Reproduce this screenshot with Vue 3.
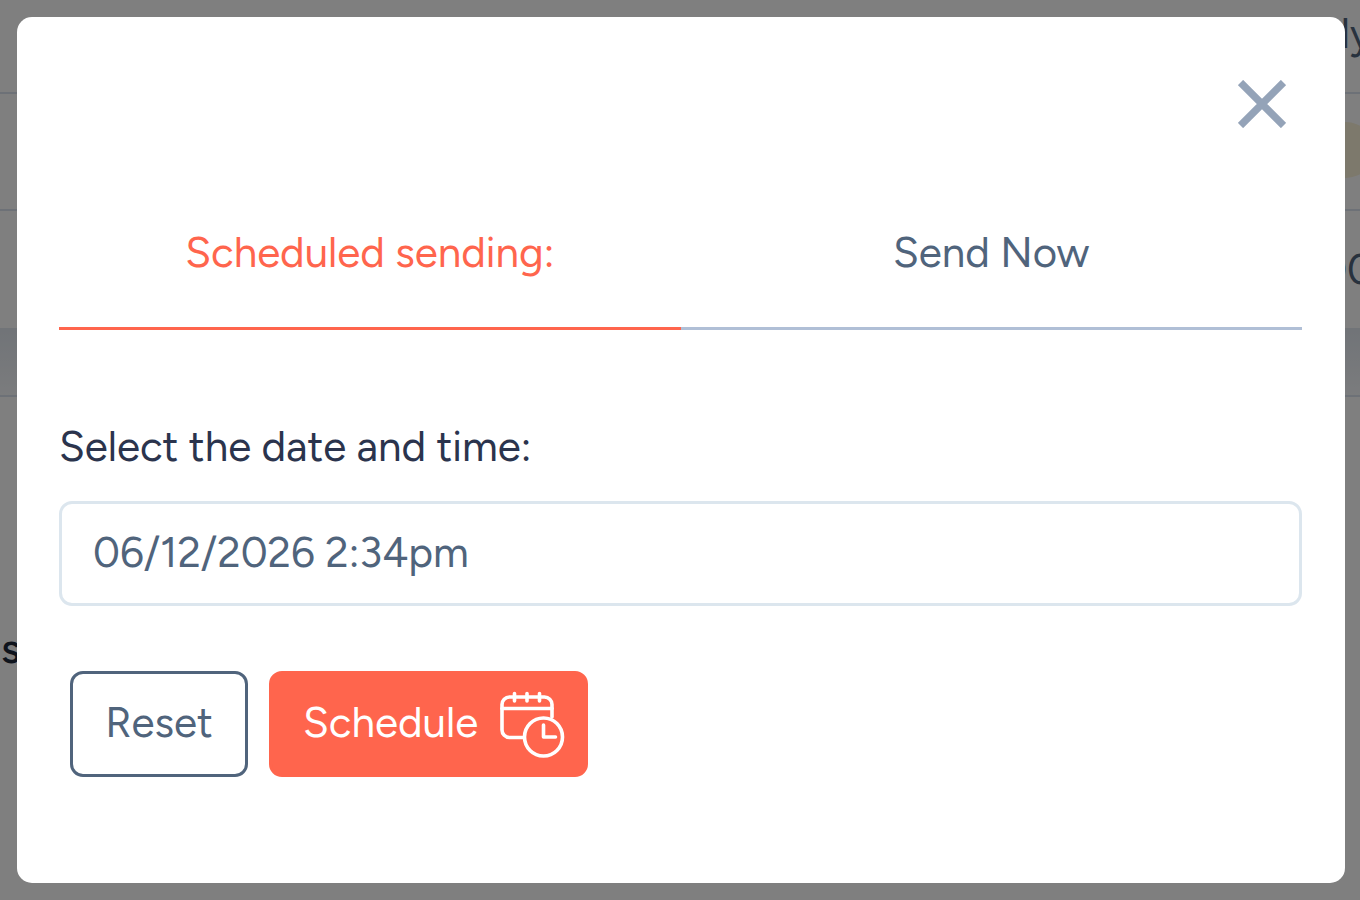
<template>
  <div class="page">
    <div class="page-content" aria-hidden="true">
      <div class="list-row list-row-first"><span>ly</span></div>
      <div class="list-row"><span class="status-pill"></span></div>
      <div class="list-row list-row-last"><span>00</span></div>
      <div class="list-footer"></div>
      <div class="section-title">s</div>
    </div>

    <div class="overlay">
      <div class="modal" role="dialog" aria-modal="true" aria-label="Schedule">
        <div class="modal-header">
          <button type="button" class="close-button" aria-label="Close">
            <svg viewBox="0 0 48 48" fill="none" stroke="currentColor" stroke-width="7.4">
              <path d="M2.500 2.500 45.500 45.500M45.500 2.500 2.500 45.500" />
            </svg>
          </button>
        </div>

        <div class="tabs" role="tablist">
          <button
            v-for="tab in tabs"
            :key="tab.id"
            type="button"
            role="tab"
            class="tab"
            :class="{ active: activeTab === tab.id }"
            :aria-selected="activeTab === tab.id"
            @click="activeTab = tab.id"
          >
            {{ tab.label }}
          </button>
        </div>

        <form @submit.prevent>
          <label class="field-label" for="send-at">Select the date and time:</label>
          <input id="send-at" v-model="sendAt" class="field-input" type="text" />

          <div class="actions">
            <button type="button" class="btn btn-outline" @click="reset">Reset</button>
            <button type="submit" class="btn btn-primary">
              <span>Schedule</span>
              <svg
                class="calendar-icon"
                viewBox="0 0 66 68"
                fill="none"
                stroke="currentColor"
                stroke-width="3.6"
                stroke-linecap="round"
                stroke-linejoin="round"
              >
                <path d="M24 46.500H10.500a7.500 7.500 0 0 1-7.500-7.500V13.500A7.500 7.500 0 0 1 10.500 6h35a7.500 7.500 0 0 1 7.500 7.500V26" />
                <path d="M3 17.500H53" />
                <path d="M15.500 2.500V10M28 2.500V10M40.500 2.500V10" />
                <circle cx="44.500" cy="46" r="19" />
                <path d="M44.500 34V46H56.500" />
              </svg>
            </button>
          </div>
        </form>
      </div>
    </div>
  </div>
</template>

<script setup>
import { ref } from 'vue'

const defaultDate = '06/12/2026 2:34pm'

const tabs = [
  { id: 'scheduled', label: 'Scheduled sending:' },
  { id: 'now', label: 'Send Now' }
]

const activeTab = ref('scheduled')
const sendAt = ref(defaultDate)

const reset = () => {
  sendAt.value = defaultDate
}
</script>

<style>
body {
  margin: 0;
  background: #808080;
}
</style>

<style scoped>
.page {
  display: grid;
  min-height: 100vh;
  overflow: hidden;
  font-family: Figtree, Lato, sans-serif;
  font-size: 42px;
  line-height: 64px;
  color: #50647c;
}

.page-content,
.overlay {
  grid-area: 1 / 1;
  min-width: 0;
}

.page-content {
  background: #fff;
  overflow: hidden;
}

.list-row {
  display: flex;
  align-items: center;
  justify-content: flex-end;
  box-sizing: border-box;
  height: 117px;
  border-bottom: 2px solid #dbe3ee;
}

.list-row span {
  flex: none;
  margin-right: -14px;
}

.list-row-first {
  height: 94px;
  padding-bottom: 24px;
}

.list-row-first span {
  margin-right: -12px;
}

.list-row-last {
  border-bottom: none;
}

.status-pill {
  width: 80px;
  height: 56px;
  margin-top: -4px;
  border-radius: 28px;
  background: #fbf2d9;
}

.list-footer {
  box-sizing: border-box;
  height: 69px;
  background: linear-gradient(#e2e8f0, #f6f8fb);
  border-bottom: 2px solid #dbe3ee;
}

.section-title {
  padding: 220px 0 0 1px;
  color: #1e293b;
  font-weight: 500;
}

.overlay {
  z-index: 1;
  box-sizing: border-box;
  padding: 17px 15px 17px 17px;
  background: rgba(0, 0, 0, 0.5);
}

.modal {
  padding: 63px 43px 106px 42px;
  border-radius: 15px;
  background: #fff;
}

.modal-header {
  display: flex;
  justify-content: flex-end;
  padding-right: 16px;
}

button,
input {
  font: inherit;
  color: inherit;
  cursor: pointer;
}

.close-button {
  display: block;
  width: 48px;
  height: 48px;
  padding: 0;
  border: none;
  background: none;
  color: #94a3b8;
}

.close-button svg {
  display: block;
  width: 100%;
  height: 100%;
}

.tabs {
  display: flex;
  margin-top: 48px;
}

.tab {
  flex: 1;
  padding: 45px 0 42px;
  border: none;
  border-bottom: 3px solid #b0bfd6;
  background: none;
}

.tab.active {
  color: #ff654d;
  border-bottom-color: #ff654d;
}

.field-label {
  display: block;
  margin-top: 85px;
  color: #2b344d;
}

.field-input {
  display: block;
  box-sizing: border-box;
  width: 100%;
  height: 105px;
  margin-top: 22px;
  padding: 0 31px 2px;
  border: 3px solid #dce6ee;
  border-radius: 13px;
  background: #fff;
  cursor: text;
}

.actions {
  display: flex;
  gap: 21px;
  margin-top: 65px;
  padding-left: 11px;
}

.btn {
  display: flex;
  align-items: center;
  justify-content: center;
  box-sizing: border-box;
  height: 106px;
  padding: 0 31px 2px;
  border: 3px solid #50647c;
  border-radius: 13px;
  background: #fff;
}

.btn-outline {
  min-width: 178px;
}

.btn-primary {
  gap: 20px;
  min-width: 319px;
  padding-right: 20px;
  justify-content: space-between;
  border-color: #ff654d;
  background: #ff654d;
  color: #fff;
}

.calendar-icon {
  width: 66px;
  height: 68px;
  margin-top: 4px;
}
</style>
